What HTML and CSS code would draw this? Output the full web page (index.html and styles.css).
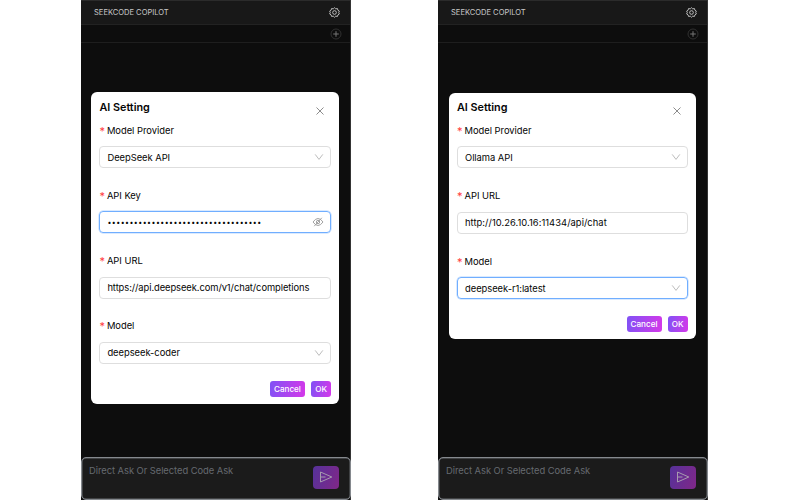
FILE: index.html
```
<!DOCTYPE html>
<html lang="en">
<head>
<meta charset="utf-8">
<title>SeekCode Copilot</title>
<link rel="stylesheet" href="styles.css">
</head>
<body>
<svg class="defs" aria-hidden="true">
  <symbol id="gear" viewBox="0 0 12 12"><path d="M6 .8 7.3 2l1.900-.3.5 1.800 1.600 1L10.600 6l.7 1.600-1.600 1-.5 1.700L7.300 10 6 11.200 4.700 10l-1.900.3-.5-1.700-1.600-1L1.400 6 .7 4.500l1.600-1 .5-1.800L4.700 2Z"/><circle cx="6" cy="6" r="2"/></symbol>
  <symbol id="plus" viewBox="0 0 12 12"><circle class="ring" cx="6" cy="6" r="5"/><path d="M6 3.200v5.600M3.200 6h5.600"/></symbol>
  <symbol id="close" viewBox="0 0 10 10"><path d="m1.500 1.500 7 7m0-7-7 7"/></symbol>
  <symbol id="down" viewBox="0 0 10 8"><path d="m1.200 1.400 3.800 5 3.800-5"/></symbol>
  <symbol id="hidden" viewBox="0 0 12 10"><path d="M1 5q5-7 10 0-5 7-10 0ZM2.200 9.200 9.800.8"/><circle cx="6" cy="5" r="1.700"/></symbol>
  <symbol id="send" viewBox="0 0 14 12"><path d="M1.500 1 12.800 6 1.500 11V1M1.500 6H6.500"/></symbol>
</svg>
<main class="stage">
  <section class="panel first">
    <header class="bar"><span>SEEKCODE COPILOT</span><svg class="gear"><use href="#gear"/></svg></header>
    <div class="subbar"><svg class="plus"><use href="#plus"/></svg></div>
    <div class="body">
      <form class="modal">
        <div class="head"><h2>AI Setting</h2><svg class="close"><use href="#close"/></svg></div>
        <div class="field"><label>Model Provider</label><div class="control"><span>DeepSeek API</span><svg class="down"><use href="#down"/></svg></div></div>
        <div class="field"><label>API Key</label><div class="control focus"><span class="dots">•••••••••••••••••••••••••••••••••••</span><svg class="hidden"><use href="#hidden"/></svg></div></div>
        <div class="field"><label>API URL</label><div class="control"><span class="url">https://api.deepseek.com/v1/chat/completions</span></div></div>
        <div class="field"><label>Model</label><div class="control"><span>deepseek-coder</span><svg class="down"><use href="#down"/></svg></div></div>
        <div class="actions"><button type="button">Cancel</button><button type="button">OK</button></div>
      </form>
    </div>
    <footer class="ask"><span>Direct Ask Or Selected Code Ask</span><div class="send"><svg><use href="#send"/></svg></div></footer>
  </section>
  <section class="panel second">
    <header class="bar"><span>SEEKCODE COPILOT</span><svg class="gear"><use href="#gear"/></svg></header>
    <div class="subbar"><svg class="plus"><use href="#plus"/></svg></div>
    <div class="body">
      <form class="modal">
        <div class="head"><h2>AI Setting</h2><svg class="close"><use href="#close"/></svg></div>
        <div class="field"><label>Model Provider</label><div class="control"><span>Ollama API</span><svg class="down"><use href="#down"/></svg></div></div>
        <div class="field"><label>API URL</label><div class="control"><span class="host">http://10.26.10.16:11434/api/chat</span></div></div>
        <div class="field"><label>Model</label><div class="control focus"><span>deepseek-r1:latest</span><svg class="down"><use href="#down"/></svg></div></div>
        <div class="actions"><button type="button">Cancel</button><button type="button">OK</button></div>
      </form>
    </div>
    <footer class="ask"><span>Direct Ask Or Selected Code Ask</span><div class="send"><svg><use href="#send"/></svg></div></footer>
  </section>
</main>
</body>
</html>
```
FILE: styles.css
```
* { box-sizing: border-box; }
body { margin: 0; background: #fff; font-family: Inter, "Liberation Sans", sans-serif; font-size: 9.4px; color: #050505; }
svg { display: block; fill: none; stroke: currentColor; stroke-width: 1; flex: none; }
.defs { width: 0; height: 0; position: absolute; }
.stage { display: flex; gap: 87px; height: 500px; padding-left: 81px; overflow: hidden; }
.panel { width: 270px; height: 500px; display: flex; flex-direction: column; background: #0d0d0d; border-right: 1px solid #343434; }
.bar { height: 25px; flex: none; display: flex; align-items: center; justify-content: space-between; padding: 0 10px 0 13px; background: #181818; border-top: 1px solid #2b2b2b; border-bottom: 1px solid #222; color: #c8c8c8; font-size: 7.560px; }
.gear { width: 11px; height: 11px; }
.subbar { height: 18px; flex: none; display: flex; align-items: center; justify-content: flex-end; padding-right: 8px; border-bottom: 1px solid #1e1e1e; color: #777; }
.plus { width: 12px; height: 12px; }
.ring { stroke: #303030; }
.body { flex: 1; padding: 49px 11px 0; }
.modal { width: 248px; padding: 7.500px 8px 7.500px 8px; background: #fff; border-radius: 6px; }
.first .modal { margin-left: -.6px; }
.second .modal { padding-bottom: 7.300px; padding-top: 7px; width: 247px; margin-top: .4px; }
.second .body { padding-top: 49.600px; }
.head { display: flex; justify-content: space-between; height: 20px; }
h2 { margin: 0; font-size: 10.800px; line-height: 15px; font-weight: 600; }
.close { width: 10px; height: 10px; margin: 6px 6px 0 0; color: #8c8c8c; }
.field { height: 65.300px; }
label { display: flex; height: 26.500px; line-height: 22px; letter-spacing: -.02px; }
label::before { content: "*"; color: #ff3b3e; width: 7.500px; font-size: 11px; line-height: 23px; }
.control { height: 22px; display: flex; align-items: center; justify-content: space-between; padding: 0 6.500px 0 7px; border: 1px solid #dedede; border-radius: 4px; letter-spacing: -.04px; }
.control.focus { border-color: #70aeff; box-shadow: 0 0 0 .5px #b5d6ff; }
.url { letter-spacing: -.08px; }
.host { letter-spacing: .04px; }
.down { width: 10px; height: 8px; color: #bdbdbd; }
.hidden { width: 12px; height: 10px; color: #999; stroke-width: .9; }
.dots { font-size: 7px; letter-spacing: .47px; }
.actions { display: flex; justify-content: flex-end; gap: 6px; }
button { height: 16px; min-width: 20.500px; padding: 0 4px; border: 0; border-radius: 3px; color: #fff; font: 500 8.150px/16px Inter, "Liberation Sans", sans-serif; background: linear-gradient(100deg, #8052f5, #d538e9); }
.ask { height: 43px; flex: none; display: flex; justify-content: space-between; padding: 7px 11px 0 7px; background: #1b1b1b; border: 1px solid #85898e; box-shadow: inset 0 0 0 .5px #666a6f; border-radius: 5px; color: #666a70; font-size: 9.400px; line-height: 12px; letter-spacing: -.05px; margin-right: -1px; }
.send { width: 26px; height: 23px; margin-top: .6px; display: grid; place-items: center; border-radius: 4px; color: #a79baf; background: linear-gradient(110deg, #56329a, #802788); }
.send svg { width: 14px; height: 12px; }
```
